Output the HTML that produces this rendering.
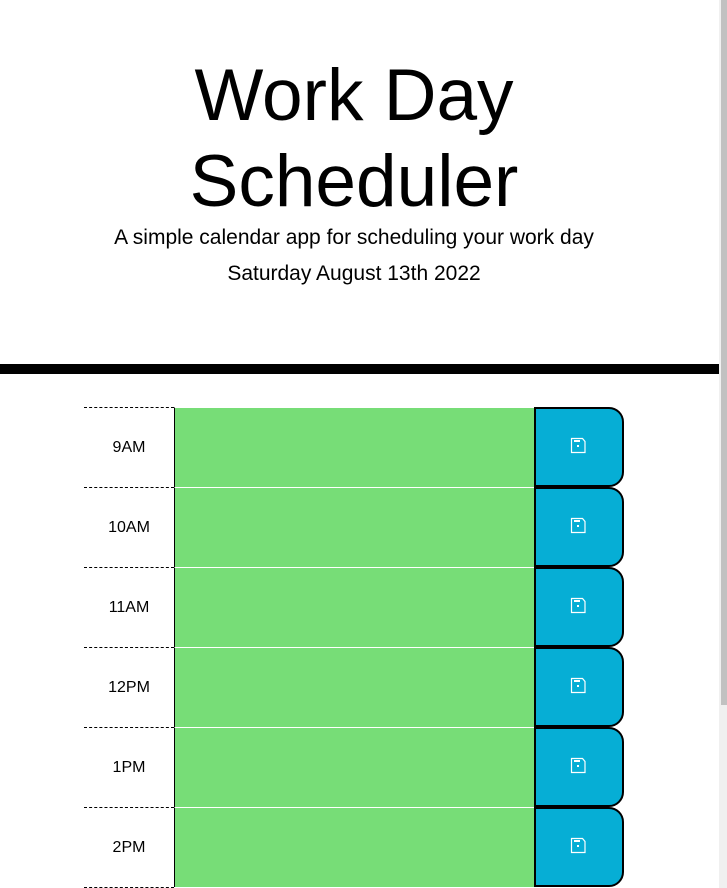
<!DOCTYPE html>
<html><head><style>
html,body{margin:0;padding:0;background:#fff;overflow:hidden}
body{width:727px;height:888px;position:relative;font-family:"Liberation Sans",sans-serif;color:#000}
.t{position:absolute;left:0;width:708px;text-align:center;white-space:nowrap}
.bar{position:absolute;left:0;top:364px;width:719px;height:10px;background:#000}
.sb{position:absolute;left:719px;top:0;width:8px;height:888px;background:#f0f0f0}
.th{position:absolute;left:721px;top:0;width:6px;height:705px;background:#c1c1c1}
.row{position:absolute;left:84px;width:540px;height:80px}
.hr{position:absolute;left:0;top:0;width:90px;height:80px;border-top:1px dashed #000;box-sizing:border-box;font-size:16px;text-align:center;line-height:80px}
.ta{position:absolute;left:90px;top:0;width:360px;height:80px;background:#77dd77;border-left:1px solid #000;border-top:1px solid #fff;box-sizing:border-box}
.bt{position:absolute;left:450px;top:0;width:90px;height:80px;background:#06aed5;border:2px solid #000;border-radius:0 15px 15px 0;box-sizing:border-box}
.bt svg{position:absolute;left:32px;top:26px}
</style></head><body>
<div class="t" style="top:56px;font-size:73px;line-height:80px">Work Day</div>
<div class="t" style="top:142px;font-size:73px;line-height:80px">Scheduler</div>
<div class="t" style="top:226px;font-size:21px;line-height:24px">A simple calendar app for scheduling your work day</div>
<div class="t" style="top:262px;font-size:21px;line-height:24px">Saturday August 13th 2022</div>
<div class="bar"></div>
<div class="row" style="top:407px"><div class="hr">9AM</div><div class="ta"></div><div class="bt"><svg width="20" height="20" viewBox="0 0 20 20"><path d="M3.5 3.5h11l2.5 3v11h-13.5z" fill="none" stroke="#fff" stroke-width="1.2"/><rect x="6" y="5" width="6" height="2" fill="#fff"/><rect x="9" y="10" width="2" height="2" fill="#fff"/></svg></div></div>
<div class="row" style="top:487px"><div class="hr">10AM</div><div class="ta"></div><div class="bt"><svg width="20" height="20" viewBox="0 0 20 20"><path d="M3.5 3.5h11l2.5 3v11h-13.5z" fill="none" stroke="#fff" stroke-width="1.2"/><rect x="6" y="5" width="6" height="2" fill="#fff"/><rect x="9" y="10" width="2" height="2" fill="#fff"/></svg></div></div>
<div class="row" style="top:567px"><div class="hr">11AM</div><div class="ta"></div><div class="bt"><svg width="20" height="20" viewBox="0 0 20 20"><path d="M3.5 3.5h11l2.5 3v11h-13.5z" fill="none" stroke="#fff" stroke-width="1.2"/><rect x="6" y="5" width="6" height="2" fill="#fff"/><rect x="9" y="10" width="2" height="2" fill="#fff"/></svg></div></div>
<div class="row" style="top:647px"><div class="hr">12PM</div><div class="ta"></div><div class="bt"><svg width="20" height="20" viewBox="0 0 20 20"><path d="M3.5 3.5h11l2.5 3v11h-13.5z" fill="none" stroke="#fff" stroke-width="1.2"/><rect x="6" y="5" width="6" height="2" fill="#fff"/><rect x="9" y="10" width="2" height="2" fill="#fff"/></svg></div></div>
<div class="row" style="top:727px"><div class="hr">1PM</div><div class="ta"></div><div class="bt"><svg width="20" height="20" viewBox="0 0 20 20"><path d="M3.5 3.5h11l2.5 3v11h-13.5z" fill="none" stroke="#fff" stroke-width="1.2"/><rect x="6" y="5" width="6" height="2" fill="#fff"/><rect x="9" y="10" width="2" height="2" fill="#fff"/></svg></div></div>
<div class="row" style="top:807px"><div class="hr">2PM</div><div class="ta"></div><div class="bt"><svg width="20" height="20" viewBox="0 0 20 20"><path d="M3.5 3.5h11l2.5 3v11h-13.5z" fill="none" stroke="#fff" stroke-width="1.2"/><rect x="6" y="5" width="6" height="2" fill="#fff"/><rect x="9" y="10" width="2" height="2" fill="#fff"/></svg></div></div>
<div class="row" style="top:887px;height:1px;border-top:1px dashed #000;width:90px"></div>
<div class="sb"></div><div class="th"></div>
</body></html>
